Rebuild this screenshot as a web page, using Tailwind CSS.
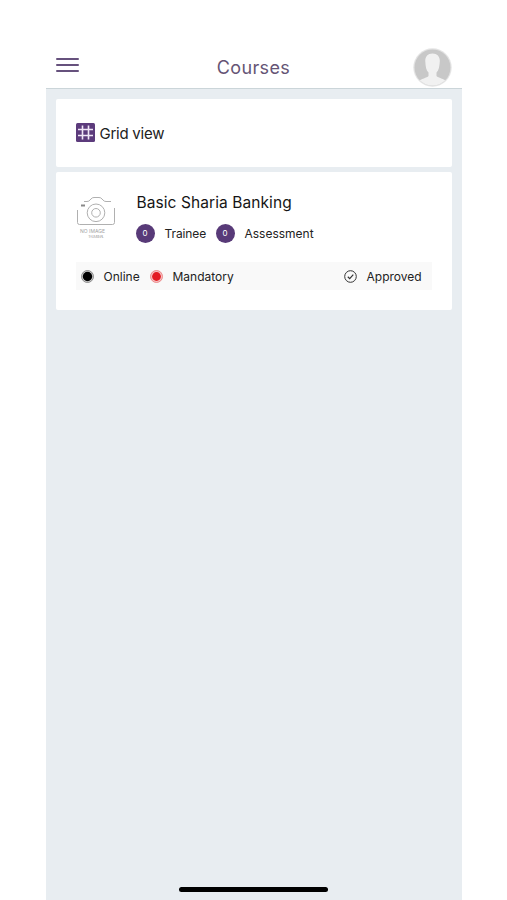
<!DOCTYPE html>
<html lang="en">

<head>
	<meta charset="utf-8" />
	<meta name="viewport" content="width=device-width, initial-scale=1" />
	<title>Courses</title>
	<script src="https://cdn.jsdelivr.net/npm/@tailwindcss/browser@4"></script>
</head>

<body class="bg-white">
	<div class="mx-auto flex h-[900px] w-[416px] flex-col bg-[#e8edf1] font-['Inter',sans-serif] text-[#222]">
		<!-- header -->
		<header class="flex h-[89px] items-end justify-between border-b border-[#cbd5d9] bg-white pr-[10px] pl-2.5">
			<button class="mb-[16px] flex w-[23px] flex-col gap-1" aria-label="Menu">
				<span class="h-[2px] w-full rounded-full bg-[#66517d]"></span>
				<span class="h-[2px] w-full rounded-full bg-[#66517d]"></span>
				<span class="h-[2px] w-full rounded-full bg-[#66517d]"></span>
			</button>
			<h1 class="mb-[7px] ml-[16px] text-[18px] leading-[26px] tracking-[0.35px] text-[#655475]">Courses</h1>
			<svg class="mb-[1px] h-[39px] w-[39px]" viewBox="0 0 39 39">
				<defs>
					<clipPath id="avatar"><circle cx="19.5" cy="19.5" r="18" /></clipPath>
				</defs>
				<circle cx="19.5" cy="19.5" r="19.2" fill="#e4e4e4" />
				<g clip-path="url(#avatar)">
					<path fill="#c8c8c8" d="M0 0h39v39H0z" />
					<path fill="#f1f1f1" d="M19.500 5.500c-5 0-7.500 3.500-7.200 8 .2 5 1 9 3.200 11v3.500c-1.500 2-7.500 2.500-10.200 6V39h28.500v-5c-2.700-3.500-8.700-4-10.300-6v-3.500c2.200-2 3-6 3.300-11 .3-4.500-2.300-8-7.300-8z" />
				</g>
			</svg>
		</header>

		<main class="flex flex-col gap-[5px] px-2.5 pt-2.5">
			<!-- view switch -->
			<section class="flex h-[68px] items-center gap-[5px] rounded-[2px] bg-white pl-5">
				<svg class="mb-[2px] h-[19px] w-[19px]" viewBox="0 0 19 19">
					<rect width="19" height="19" rx="1.500" fill="#5c3b7c" />
					<path d="M6.500 2.500v14M12.500 2.500v14M2 6.500h15M2 12.500h15" fill="none" stroke="#f0e6f7" stroke-width="1.600" />
				</svg>
				<span class="pt-px text-[15px] leading-5 tracking-[-0.25px]">Grid view</span>
			</section>

			<!-- course card -->
			<section class="h-[138px] rounded-[2px] bg-white px-5 pt-5">
				<div class="flex h-[70px]">
					<svg class="mt-[4px] h-[44px] w-[40px] shrink-0" viewBox="0 0 40 44" fill="none" stroke="#b0b0b0" stroke-width="1">
						<path d="M1.500 14v12.500q0 2 2 2h33q2 0 2-2V12M8 5.500h3q2 0 3-1.500l1-1q1-1.500 3-1.500h5q2 0 3 1.500l1 1q1 1.500 3 1.500h5" />
						<circle cx="20" cy="16.800" r="8.800" />
						<circle cx="20" cy="16.800" r="4.300" />
						<path d="M5 9.500h4" stroke="#888888" stroke-width="2" />
						<text x="4" y="36.500" fill="#a3a3a3" stroke="none" font-size="5" textLength="25">NO IMAGE</text>
						<text x="12" y="42" fill="#b5b5b5" stroke="none" font-size="4" textLength="16">THUMBNAIL</text>
					</svg>
					<div class="ml-5">
						<h2 class="pl-px text-[15.500px] leading-[22px] tracking-[0.08px] whitespace-nowrap text-[#151515]">Basic Sharia Banking</h2>
						<div class="mt-[10px] flex items-center text-[12px] leading-[19px]">
							<span class="flex h-[19px] w-[19px] items-center justify-center rounded-full bg-[#583a78] text-[8px] text-white">0</span>
							<span class="ml-[10px] w-[42px] tracking-[-0.1px] whitespace-nowrap">Trainee</span>
							<span class="ml-[9px] flex h-[19px] w-[19px] items-center justify-center rounded-full bg-[#583a78] text-[8px] text-white">0</span>
							<span class="ml-[10px] whitespace-nowrap">Assessment</span>
						</div>
					</div>
				</div>
				<div class="flex h-[28px] items-center bg-[#f9f9f9] pl-[5px] text-[12px] leading-5">
					<svg class="h-[13px] w-[13px]" viewBox="0 0 13 13">
						<circle cx="6.500" cy="6.500" r="6" fill="#d0d0d0" stroke="#777777" stroke-width=".8" />
						<circle cx="6.500" cy="6.500" r="4.700" fill="#000000" />
					</svg>
					<span class="ml-[10px] w-[36px] pt-[2px] whitespace-nowrap">Online</span>
					<svg class="ml-[10px] h-[13px] w-[13px]" viewBox="0 0 13 13">
						<circle cx="6.500" cy="6.500" r="6" fill="#f6c1c2" stroke="#e87777" stroke-width=".8" />
						<circle cx="6.500" cy="6.500" r="4.400" fill="#e31b23" />
					</svg>
					<span class="ml-[10px] pt-[2px]">Mandatory</span>
					<svg class="ml-auto h-[13px] w-[13px]" viewBox="0 0 13 13" fill="none" stroke="#333333">
						<circle cx="6.500" cy="6.500" r="5.800" />
						<path d="M3.800 6.800l1.900 1.800 3.600-4" stroke-width="1.200" />
					</svg>
					<span class="mr-[10px] ml-[10px] w-[55px] pt-[2px] whitespace-nowrap">Approved</span>
				</div>
			</section>
		</main>

		<!-- home indicator -->
		<div class="mx-auto mt-auto mb-[8px] h-[5px] w-[149px] rounded-full bg-black"></div>
	</div>
</body>

</html>
